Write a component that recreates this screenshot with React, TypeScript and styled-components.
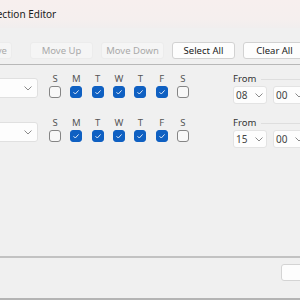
import styled, { createGlobalStyle } from "styled-components";

type DayType = {
  label: string;
  checked: boolean;
};

type ScheduleType = {
  id: number;
  hour: string;
  minute: string;
  days: DayType[];
};

const WEEKDAYS = ["S", "M", "T", "W", "T", "F", "S"];

const makeDays = (): DayType[] =>
  WEEKDAYS.map((label, i) => ({ label, checked: i > 0 && i < 6 }));

const SCHEDULES: ScheduleType[] = [
  { id: 1, hour: "08", minute: "00", days: makeDays() },
  { id: 2, hour: "15", minute: "00", days: makeDays() },
];

const Chevron = () => (
  <svg width="8" height="5" viewBox="0 0 8 5">
    <polyline
      points="0.5,0.5 4,4 7.5,0.5"
      fill="none"
      stroke="#8a8a8a"
      strokeWidth="1"
    />
  </svg>
);

const Check = () => (
  <svg width="10" height="10" viewBox="0 0 10 10">
    <polyline
      points="2.5,5.2 4.3,7 7.6,3.4"
      fill="none"
      stroke="#dfe9f7"
      strokeWidth="1"
    />
  </svg>
);

export default function App() {
  return (
    <>
      <GlobalStyle />
      <Window>
        <TitleBar>
          <Title>Selection Editor</Title>
        </TitleBar>
        <Toolbar>
          <ToolButton disabled $first>
            Remove
          </ToolButton>
          <ToolButton disabled>Move Up</ToolButton>
          <ToolButton disabled>Move Down</ToolButton>
          <ToolButton>Select All</ToolButton>
          <ToolButton>Clear All</ToolButton>
        </Toolbar>
        <List>
          {SCHEDULES.map((s) => (
            <Row key={s.id}>
              <Combo>
                <Chevron />
              </Combo>
              <DayGrid>
                {s.days.map((d, i) => (
                  <DayLabel key={"l" + i}>{d.label}</DayLabel>
                ))}
                {s.days.map((d, i) => (
                  <CheckBox key={"c" + i} $checked={d.checked}>
                    {d.checked && <Check />}
                  </CheckBox>
                ))}
              </DayGrid>
              <FromGroup>
                <GroupHeader>
                  <span>From</span>
                  <GroupLine />
                </GroupHeader>
                <TimeRow>
                  <TimeSelect>
                    <span>{s.hour}</span>
                    <Chevron />
                  </TimeSelect>
                  <TimeSelect>
                    <span>{s.minute}</span>
                    <Chevron />
                  </TimeSelect>
                </TimeRow>
              </FromGroup>
            </Row>
          ))}
        </List>
        <Footer>
          <FooterButton />
        </Footer>
      </Window>
    </>
  );
}

const GlobalStyle = createGlobalStyle`
  html, body {
    margin: 0;
    padding: 0;
  }
  body {
    width: 300px;
    height: 300px;
    overflow: hidden;
    background: #f0f0f0;
    font-family: "Noto Sans", "Open Sans", sans-serif;
  }
`;

const Window = styled.div`
  display: flex;
  flex-direction: column;
  height: 300px;
  width: 300px;
`;

const TitleBar = styled.div`
  height: 28px;
  background: linear-gradient(#f7efee, #f5efee 70%, #f1eeee);
  display: flex;
  align-items: center;
`;

const Title = styled.span`
  margin-left: -17px;
  font-size: 10px;
  color: #1b1b1b;
  white-space: nowrap;
`;

const Toolbar = styled.div`
  display: flex;
  gap: 8px;
  padding: 14px 0 5px;
`;

const ToolButton = styled.button<{ $first?: boolean }>`
  flex: none;
  width: ${(p) => (p.$first ? "46px" : "63px")};
  height: 17px;
  padding: 0;
  margin-left: ${(p) => (p.$first ? "-34px" : "0")};
  margin-right: ${(p) => (p.$first ? "10px" : "0")};
  font-family: inherit;
  font-size: 9.5px;
  color: #1a1a1a;
  background: #fdfdfd;
  border: 1px solid #d2d2d2;
  border-radius: 3px;
  white-space: nowrap;

  &:disabled {
    color: #a9a9a9;
    background: #f5f5f5;
    border-color: #ececec;
  }
`;

const List = styled.div`
  flex: 1;
  border-top: 1px solid #b8b8b8;
  padding-top: 8px;
`;

const Row = styled.div`
  display: flex;
  align-items: flex-start;
  height: 44px;
`;

const Combo = styled.div`
  flex: none;
  box-sizing: border-box;
  width: 80px;
  height: 20px;
  margin: 5px 0 0 -42px;
  padding-right: 5px;
  background: #fdfdfd;
  border: 1px solid #e0e0e0;
  border-radius: 3px;
  display: flex;
  align-items: center;
  justify-content: flex-end;
`;

const DayGrid = styled.div`
  flex: none;
  margin-left: 11px;
  display: grid;
  grid-template-columns: repeat(7, 12px);
  column-gap: 9.33px;
  row-gap: 2px;
`;

const DayLabel = styled.div`
  font-size: 9.5px;
  line-height: 11px;
  color: #555;
  text-align: center;
`;

const CheckBox = styled.div<{ $checked: boolean }>`
  box-sizing: border-box;
  width: 12px;
  height: 12px;
  border-radius: 3px;
  display: flex;
  align-items: center;
  justify-content: center;
  background: ${(p) => (p.$checked ? "#0f60c2" : "#f8f8f8")};
  border: 1px solid ${(p) => (p.$checked ? "#0f60c2" : "#858585")};
`;

const FromGroup = styled.div`
  flex: none;
  width: 80px;
  margin-left: 44px;
  display: flex;
  flex-direction: column;
  gap: 2px;
`;

const GroupHeader = styled.div`
  display: flex;
  align-items: center;
  gap: 5px;
  font-size: 9.5px;
  line-height: 11px;
  color: #333;
`;

const GroupLine = styled.div`
  flex: 1;
  height: 1px;
  margin-top: 1px;
  background: #dedede;
`;

const TimeRow = styled.div`
  display: flex;
  gap: 6px;
`;

const TimeSelect = styled.div`
  flex: none;
  box-sizing: border-box;
  width: 34px;
  height: 18px;
  padding: 0 3px 0 2px;
  background: #fdfdfd;
  border: 1px solid #e3e3e3;
  border-radius: 3px;
  display: flex;
  align-items: center;
  justify-content: space-between;
  font-size: 10px;
  color: #444;
`;

const Footer = styled.div`
  height: 34px;
  border-top: 2px solid #c2c2c2;
  border-bottom: 2px solid #b4b4b4;
  display: flex;
  justify-content: flex-end;
  align-items: flex-start;
  padding-top: 6px;
  box-sizing: content-box;
`;

const FooterButton = styled.button`
  flex: none;
  width: 60px;
  height: 17px;
  margin-right: -41px;
  background: #fdfdfd;
  border: 1px solid #d4d4d4;
  border-radius: 3px;
`;
